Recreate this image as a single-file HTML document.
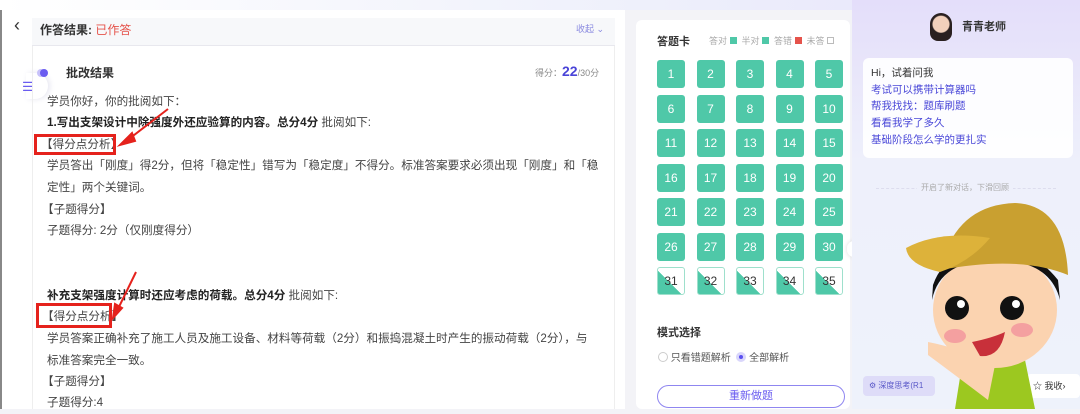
<!DOCTYPE html>
<html><head><meta charset="utf-8"><style>
*{margin:0;padding:0;box-sizing:border-box}
body{width:1080px;height:409px;overflow:hidden;background:#f3f3f7;font-family:"Liberation Sans","Noto Sans CJK SC",sans-serif;position:relative;color:#333}
.abs{position:absolute}
.left{left:0;top:0;width:625px;height:409px;background:#fff;border-left:2px solid #888}
.hdr{left:32px;top:18px;width:583px;height:28px;background:#f7f8fa;border-bottom:1px solid #e8e8ee;font-size:12px;font-weight:bold;line-height:24px;padding-left:8px}
.t{font-size:11.6px;line-height:22px;left:47px;color:#444;white-space:nowrap}
.red{border:3px solid #e5221c;}
.tile{position:absolute;width:28px;height:28px;border-radius:3px;background:#4fc8a8;color:#fff;font-size:12px;text-align:center;line-height:28px}
.half{background:linear-gradient(to top right,#4fc8a8 45%,#fff 45%);border:1px solid #9ee0cc;color:#333;line-height:26px}
</style></head><body>
<div class="abs left"></div>
<div class="abs" style="left:0;top:0;width:1080px;height:10px;background:linear-gradient(90deg,#fff,#eef0fb 60%,#e6e2fb)"></div>
<div class="abs" style="left:14px;top:15px;font-size:18px;color:#333">‹</div>
<div class="abs" style="left:26px;top:73px;width:22px;height:26px;background:#fff;border-radius:0 13px 13px 0;box-shadow:2px 0 6px #e6e6f0"></div>
<div class="abs" style="left:22px;top:79px;font-size:13px;color:#6a5cf0">☰</div>
<div class="abs" style="left:32px;top:46px;width:583px;height:363px;border-left:1px solid #eee;border-right:1px solid #eee"></div>
<div class="abs hdr">作答结果: <span style="color:#e5534b;font-weight:normal">已作答</span></div>
<div class="abs" style="left:576px;top:22px;font-size:9px;color:#8a8ae0">收起 ⌄</div>
<div class="abs" style="left:40px;top:69px;width:8px;height:8px;border-radius:4px;background:#6a5cf0;box-shadow:-3px 0 0 #c8c2fa"></div>
<div class="abs" style="left:66px;top:64px;font-size:12px;font-weight:bold">批改结果</div>
<div class="abs" style="left:535px;top:63px;font-size:9px;color:#888">得分：<b style="font-size:14px;color:#4a44d8">22</b>/30分</div>
<div class="abs t" style="top:91px">学员你好，你的批阅如下：</div>
<div class="abs t" style="top:112px"><b style="color:#222">1.写出支架设计中除强度外还应验算的内容。总分4分</b> 批阅如下:</div>
<div class="abs t" style="top:134px;left:41px">【得分点分析】</div>
<div class="abs red" style="left:34px;top:134px;width:82px;height:21px"></div>
<div class="abs t" style="top:155px">学员答出「刚度」得2分，但将「稳定性」错写为「稳定度」不得分。标准答案要求必须出现「刚度」和「稳<br>定性」两个关键词。</div>
<div class="abs t" style="top:199px;left:42px">【子题得分】</div>
<div class="abs t" style="top:220px">子题得分: 2分（仅刚度得分）</div>
<div class="abs t" style="top:285px"><b style="color:#222">补充支架强度计算时还应考虑的荷载。总分4分</b> 批阅如下:</div>
<div class="abs t" style="top:306px;left:42px">【得分点分析】</div>
<div class="abs red" style="left:36px;top:303px;width:76px;height:25px"></div>
<div class="abs t" style="top:328px">学员答案正确补充了施工人员及施工设备、材料等荷载（2分）和振捣混凝土时产生的振动荷载（2分），与</div>
<div class="abs t" style="top:350px">标准答案完全一致。</div>
<div class="abs t" style="top:371px;left:42px">【子题得分】</div>
<div class="abs t" style="top:392px">子题得分:4</div>
<svg class="abs" style="left:0;top:0" width="620" height="409"><g stroke="#e5221c" stroke-width="2" fill="#e5221c"><line x1="168" y1="109" x2="125" y2="142"/><polygon points="120,145 132,133 135,141"/><line x1="136" y1="272" x2="116" y2="313"/><polygon points="113,318 115,304 122,308"/></g></svg>

<div class="abs" style="left:636px;top:20px;width:214px;height:389px;background:#fff;border-radius:6px"></div>
<div class="abs" style="left:657px;top:33px;font-size:11px;font-weight:bold">答题卡</div>
<div class="abs" style="left:709px;top:34px;font-size:9px;color:#aaa;white-space:nowrap">答对 <span style="display:inline-block;width:7px;height:7px;background:#4fc8a8"></span>&nbsp; 半对 <span style="display:inline-block;width:7px;height:7px;background:#4fc8a8"></span>&nbsp; 答错 <span style="display:inline-block;width:7px;height:7px;background:#e5534b"></span>&nbsp; 未答 <span style="display:inline-block;width:7px;height:7px;border:1px solid #bbb"></span></div>
<div id="g"></div>
<div class="abs" style="left:847px;top:241px;width:14px;height:16px;background:#fff;border-radius:8px;color:#6a5cf0;font-size:11px;text-align:center;box-shadow:0 0 4px #ddd">›</div>
<div class="abs" style="left:657px;top:324px;font-size:11px;font-weight:bold">模式选择</div>
<div class="abs" style="left:658px;top:349px;font-size:10px;color:#555"><span style="display:inline-block;width:10px;height:10px;border:1px solid #ccc;border-radius:5px;vertical-align:-1px"></span> 只看错题解析 &nbsp;<span style="display:inline-block;width:10px;height:10px;border:3px solid #d9d6fb;background:#5a4ff0;border-radius:5px;vertical-align:-1px"></span> 全部解析</div>
<div class="abs" style="left:657px;top:385px;width:188px;height:23px;border:1px solid #8f86f0;border-radius:12px;color:#6a5cf0;font-size:11px;text-align:center;line-height:21px">重新做题</div>

<div class="abs" style="left:852px;top:0;width:228px;height:409px;background:linear-gradient(180deg,#e4defa,#eef0fb 40%,#eef2fb)"></div>
<div class="abs" style="left:930px;top:13px;width:22px;height:28px;border-radius:11px 11px 8px 8px;background:radial-gradient(circle at 50% 40%,#f2d0bb 40%,#2a2020 45%)"></div>
<div class="abs" style="left:962px;top:18px;font-size:11px;font-weight:bold">青青老师</div>
<div class="abs" style="left:863px;top:58px;width:210px;height:100px;background:#fff;border-radius:6px;opacity:.9"></div>
<div class="abs" style="left:871px;top:65px;font-size:10.5px;line-height:16.7px;color:#4a48d8"><span style="color:#333">Hi，试着问我</span><br>考试可以携带计算器吗<br>帮我找找：题库刷题<br>看看我学了多久<br>基础阶段怎么学的更扎实</div>
<div class="abs" style="left:876px;top:188px;width:180px;border-top:1px dashed #dde;"></div>
<div class="abs" style="left:917px;top:182px;font-size:8px;color:#aaa;background:#eef0fb;padding:0 4px">开启了新对话，下滑回顾</div>
<div class="abs" style="left:863px;top:376px;width:72px;height:20px;background:#dedcf8;border-radius:4px;font-size:8px;color:#5a58c8;line-height:20px;padding-left:6px">⚙ 深度思考(R1</div>
<div class="abs" style="left:1027px;top:374px;width:53px;height:24px;background:#fff;border-radius:4px;font-size:9px;line-height:24px;padding-left:6px">☆ 我收›</div>
<svg class="abs" style="left:900px;top:200px" width="180" height="209">
<path d="M55 209 L62 165 L125 160 L135 209Z" fill="#9cc820"/>
<ellipse cx="95" cy="110" rx="62" ry="58" fill="#fbd3b0"/>
<path d="M32 100 Q40 60 95 60 Q150 60 160 100 L158 80 Q130 45 90 48 Q45 50 33 85Z" fill="#111"/>
<path d="M40 70 Q55 5 115 3 Q165 5 168 75 Q120 55 40 70Z" fill="#c9a030"/>
<path d="M6 48 Q40 30 90 38 Q70 62 40 72 Q8 65 6 48Z" fill="#ddb23a"/>
<circle cx="57" cy="108" r="12" fill="#111"/><circle cx="112" cy="108" r="12" fill="#111"/>
<circle cx="61" cy="104" r="4" fill="#fff"/><circle cx="116" cy="104" r="4" fill="#fff"/>
<ellipse cx="55" cy="136" rx="11" ry="7" fill="#f4a0a0"/><ellipse cx="122" cy="130" rx="11" ry="7" fill="#f4a0a0"/>
<path d="M72 142 Q92 138 105 132 Q100 158 80 156Z" fill="#c8303a"/>
<path d="M28 142 Q60 148 95 165 L88 200 Q55 175 28 155Z" fill="#fbd3b0"/>
</svg>
<script>
var g='';for(var i=0;i<35;i++){var c=i%5,r=Math.floor(i/5);g+='<div class="tile'+(i>=30?' half':'')+'" style="left:'+(657+c*39.5)+'px;top:'+(60+r*34.5)+'px">'+(i+1)+'</div>';}document.getElementById('g').innerHTML=g;
</script>
</body></html>
